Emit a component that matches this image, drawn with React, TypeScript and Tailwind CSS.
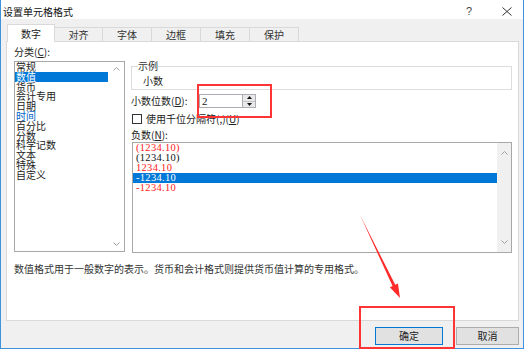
import React from 'react';

const Chevron = ({ dir }: { dir: 'up' | 'down' }) => (
  <svg width="7" height="4" viewBox="0 0 7 4">
    <polyline
      points={dir === 'up' ? '0.5,3.5 3.5,0.5 6.5,3.5' : '0.5,0.5 3.5,3.5 6.5,0.5'}
      fill="none"
      stroke="#a0a0a0"
      strokeWidth="1"
    />
  </svg>
);

const cats = ['常规', '数值', '货币', '会计专用', '日期', '时间', '百分比', '分数', '科学记数', '文本', '特殊', '自定义'];

const negs: { t: string; c: string }[] = [
  { t: '(1234.10)', c: 'text-[#ff1a1a]' },
  { t: '(1234.10)', c: 'text-[#111111]' },
  { t: '1234.10', c: 'text-[#ff1a1a]' },
  { t: '-1234.10', c: 'text-white bg-[#0078d7]' },
  { t: '-1234.10', c: 'text-[#ff1a1a]' },
];

const tabs = [
  { t: '对齐', w: 'w-[48px]' },
  { t: '字体', w: 'w-[49px]' },
  { t: '边框', w: 'w-[49px]' },
  { t: '填充', w: 'w-[49px]' },
  { t: '保护', w: 'w-[49px]' },
];

export default function App() {
  return (
    <div className="relative w-[526px] h-[350px] bg-white font-['Noto_Sans_CJK_SC',sans-serif] text-[#222] text-[10px] leading-[12px]">
      <div className="w-[524px] h-[349px] border-x border-b border-[#3f92dc] bg-[#f0f0f0] flex flex-col">
        {/* title bar */}
        <div className="h-[19px] bg-white flex items-start">
          <div className="pl-[2px] pt-[6px] text-[10px] leading-[12px] text-[#111]">设置单元格格式</div>
          <div className="ml-auto flex items-start pt-[5px] pr-[11px]">
            <span className="font-['Liberation_Sans',sans-serif] text-[11px] leading-[12px] text-[#444]">?</span>
            <svg className="ml-[30px] mt-[2px]" width="10" height="9" viewBox="0 0 10 9">
              <path d="M0.5 0.5L9.5 8.5M9.5 0.5L0.5 8.5" stroke="#333" strokeWidth="1" fill="none" />
            </svg>
          </div>
        </div>

        {/* tabs */}
        <div className="mt-[5px] ml-[6px] flex items-end h-[17px]">
          <div className="relative z-10 -mb-px h-[18px] w-[48px] bg-white border-x border-t border-[#d9d9d9] flex items-center justify-center">
            数字
          </div>
          {tabs.map((t) => (
            <div
              key={t.t}
              className={`${t.w} h-[14px] border-t border-r border-[#d9d9d9] bg-[#f0f0f0] flex items-center justify-center text-[#333]`}
            >
              {t.t}
            </div>
          ))}
        </div>

        {/* panel */}
        <div className="ml-[5px] w-[513px] h-[280px] border border-[#d9d9d9] bg-white flex flex-col">
          <div className="flex">
            {/* left column */}
            <div className="pl-[7px] pt-[4px] flex flex-col">
              <div>
                分类(<u>C</u>):
              </div>
              <div className="mt-[3px] w-[111px] h-[191px] border border-[#a8a8a8] flex">
                <div className="w-[93px] flex flex-col">
                  {cats.map((c) => (
                    <div
                      key={c}
                      className={`h-[9.8px] leading-[9.8px] pl-[1px] whitespace-nowrap ${
                        c === '数值' ? 'bg-[#0078d7] text-white' : c === '时间' ? 'text-[#0063c6]' : 'text-[#222]'
                      }`}
                    >
                      {c}
                    </div>
                  ))}
                </div>
                <div className="w-[16px] flex flex-col items-center justify-between py-[5px]">
                  <Chevron dir="up" />
                  <Chevron dir="down" />
                </div>
              </div>
            </div>

            {/* right column */}
            <div className="ml-[6px] pt-[18px] flex flex-col">
              <fieldset className="w-[381px] border border-[#dcdcdc]">
                <legend className="ml-[6px] text-[#333]">示例</legend>
                <div className="h-[17px] pt-[3px] pl-[11px]">小数</div>
              </fieldset>

              <div className="mt-[4px] flex items-center h-[14px]">
                <div className="w-[68px]">
                  小数位数(<u>D</u>):
                </div>
                <div className="w-[57px] h-[14px] border border-[#abadb3] flex bg-white">
                  <div className="flex-1 pl-[2px] font-['Liberation_Serif',serif] text-[11px] leading-[12px]">2</div>
                  <div className="w-[13px] border-l border-[#abadb3] bg-[#e9e9e9] flex flex-col">
                    <div className="flex-1 flex items-center justify-center border-b border-[#c4c4c4]">
                      <svg width="5" height="3" viewBox="0 0 5 3">
                        <polygon points="0,3 2.5,0 5,3" fill="#111" />
                      </svg>
                    </div>
                    <div className="flex-1 flex items-center justify-center">
                      <svg width="5" height="3" viewBox="0 0 5 3">
                        <polygon points="0,0 2.5,3 5,0" fill="#111" />
                      </svg>
                    </div>
                  </div>
                </div>
              </div>

              <div className="mt-[6px] flex items-center h-[10px]">
                <div className="ml-[1px] w-[10px] h-[10px] border border-[#333] bg-white" />
                <div className="ml-[4px]">
                  使用千位分隔符(,)(<u>U</u>)
                </div>
              </div>

              <div className="mt-[5px]">
                负数(<u>N</u>):
              </div>

              <div className="mt-[1px] ml-[1px] w-[380px] h-[111px] border border-[#a8a8a8] flex">
                <div className="flex-1 flex flex-col">
                  {negs.map((n, i) => (
                    <div
                      key={i}
                      className={`h-[10px] leading-[10px] pl-[3px] font-['Liberation_Serif',serif] text-[10.5px] tracking-[0.3px] ${n.c}`}
                    >
                      {n.t}
                    </div>
                  ))}
                </div>
                <div className="w-[14px] bg-[#f0f0f0] flex flex-col items-center justify-between py-[8px]">
                  <Chevron dir="up" />
                  <Chevron dir="down" />
                </div>
              </div>
            </div>
          </div>

          <div className="mt-[10px] pl-[7px] whitespace-nowrap text-[#333]">
            数值格式用于一般数字的表示。货币和会计格式则提供货币值计算的专用格式。
          </div>
        </div>

        {/* buttons */}
        <div className="mt-[6px] flex justify-end pr-[4px] gap-[13px]">
          <div className="w-[68px] h-[18px] border border-[#0078d7] bg-[#e1e1e1] flex items-center justify-center">
            确定
          </div>
          <div className="w-[63px] h-[18px] border border-[#adadad] bg-[#e1e1e1] flex items-center justify-center">
            取消
          </div>
        </div>
      </div>

      {/* annotations */}
      <div className="absolute left-[197px] top-[84px] w-[75px] h-[34px] border-2 border-[#ff3535]" />
      <div className="absolute left-[359px] top-[306px] w-[96px] h-[43px] border-2 border-[#ff3535]" />
      <svg className="absolute left-0 top-0 pointer-events-none" width="526" height="350" viewBox="0 0 526 350">
        <polygon
          points="360,215 395.25,284.75 397.96,283.44 400,298 389.84,287.36 392.55,286.05"
          fill="#ff2a2a"
        />
      </svg>
    </div>
  );
}
